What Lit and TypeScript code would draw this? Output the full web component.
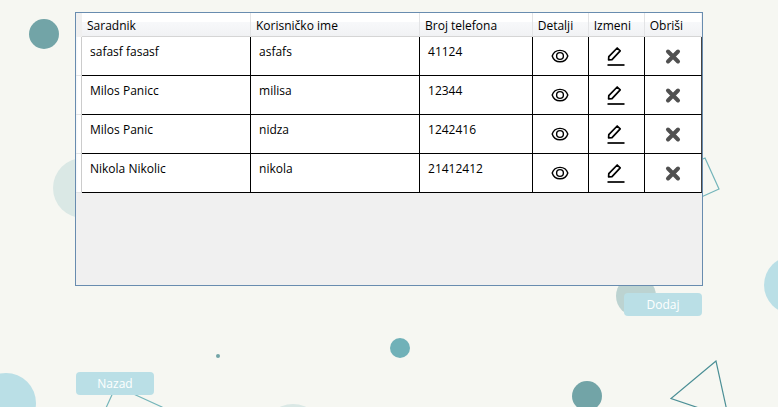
import { LitElement, html, css, svg } from "lit";
import { customElement, state } from "lit/decorators.js";

interface Associate {
  name: string;
  username: string;
  phone: string;
}

const eyeIcon = svg`<svg class="icon" viewBox="0 0 20 20" aria-hidden="true">
  <g fill="none" stroke="#000" stroke-width="1.4">
    <path d="M2.2 10C3.4 6.4 6.2 4.4 10 4.4S16.600 6.400 17.800 10C16.600 13.800 13.800 15.800 10 15.800S3.400 13.800 2.200 10Z"/>
    <circle cx="10" cy="10" r="3.400"/>
  </g>
</svg>`;

const pencilIcon = svg`<svg class="icon" viewBox="0 0 20 20" aria-hidden="true">
  <g fill="none" stroke="#000" stroke-width="1.7" stroke-linejoin="round">
    <path d="M2.600 14L2.800 10.600L11.200 2L14.200 4.900L6 13.600Z"/>
    <path d="M1.500 19H18.500"/>
  </g>
</svg>`;

const crossIcon = svg`<svg class="icon" viewBox="0 0 20 20" aria-hidden="true">
  <path d="M5 5.500L15 15.500M15 5.500L5 15.500" fill="none" stroke="#505050" stroke-width="4" stroke-linecap="round"/>
</svg>`;

@customElement("app-root")
export class AppRoot extends LitElement {
  static styles = css`
    :host {
      display: block;
      position: relative;
      overflow: hidden;
      background: #f6f7f2;
      color: #000;
      font: 12px/16px "Open Sans", "Noto Sans", sans-serif;
    }
    .backdrop {
      position: absolute;
      inset: 0;
      width: 100%;
      height: 100%;
    }
    .page {
      position: relative;
      box-sizing: border-box;
      min-height: 100vh;
      padding: 12px 75px;
      display: flex;
      flex-direction: column;
    }
    .grid {
      flex: 1;
      border: 1px solid #688caf;
      background: #f0f0f0;
    }
    table {
      width: 100%;
      table-layout: fixed;
      border-collapse: separate;
      border-spacing: 0;
    }
    .gutter { width: 6px; }
    .wide { width: 27%; }
    .medium { width: 18%; }
    .narrow { width: 56px; }
    th, td {
      box-sizing: border-box;
      padding: 0;
      text-align: left;
      font-weight: 400;
      white-space: nowrap;
    }
    th {
      height: 24px;
      padding: 5px 0 0 5px;
      vertical-align: top;
      border-bottom: 1px solid #d5d5d5;
      border-right: 1px solid #e3e4e6;
      background: linear-gradient(#fff 40%, #f7f8fa 41%, #f1f2f4);
    }
    th:last-child { border-right-color: #f1f2f4; }
    td {
      height: 39px;
      padding: 7px 0 0 8px;
      vertical-align: top;
      background: #fff;
      border-bottom: 1px solid #000;
      border-right: 1px solid #000;
    }
    td:last-child { border-right-color: #444; }
    .handle {
      padding: 0;
      border-right-color: #ccc;
      border-bottom-color: #e3e4e6;
      background: linear-gradient(90deg, #f4f5f7, #fff 40%);
    }
    .corner {
      height: 24px;
      padding: 0;
      border-color: #f0f0f0;
      background: #f0f0f0;
    }
    .action {
      padding: 0;
      vertical-align: middle;
      text-align: center;
    }
    .tool {
      display: inline-block;
      padding: 0;
      border: 0;
      background: none;
      vertical-align: middle;
      cursor: pointer;
    }
    .icon {
      display: block;
      width: 20px;
      height: 20px;
    }
    .push {
      width: 78px;
      height: 23px;
      padding: 0;
      border: 0;
      border-radius: 4px;
      background: #badfe6;
      color: #fff;
      font: inherit;
      cursor: pointer;
    }
    .add {
      align-self: flex-end;
      margin: 7px 1px 56px;
    }
    .back { margin-left: 1px; }
  `;

  @state() private associates: Associate[] = [
    { name: "safasf fasasf", username: "asfafs", phone: "41124" },
    { name: "Milos Panicc", username: "milisa", phone: "12344" },
    { name: "Milos Panic", username: "nidza", phone: "1242416" },
    { name: "Nikola Nikolic", username: "nikola", phone: "21412412" },
  ];

  private action(label: string, icon: unknown) {
    return html`<td class="action">
      <button class="tool" type="button" aria-label=${label}>${icon}</button>
    </td>`;
  }

  render() {
    return html`
      <svg class="backdrop" viewBox="0 0 778 407" preserveAspectRatio="xMidYMid slice" aria-hidden="true">
        <g fill="#72a4a7">
          <circle cx="44" cy="34" r="15"/>
          <circle cx="587" cy="396" r="15"/>
          <circle cx="218" cy="356" r="2"/>
        </g>
        <g fill="#dae8e5">
          <circle cx="83" cy="188" r="30"/>
          <circle cx="293" cy="434" r="30"/>
        </g>
        <g fill="#badfe6">
          <circle cx="6" cy="403" r="30"/>
          <circle cx="793" cy="285" r="29"/>
        </g>
        <circle cx="636" cy="296" r="20" fill="#bcd3d1"/>
        <circle cx="400" cy="348" r="10" fill="#70b1b8"/>
        <g fill="none" stroke="#74b5ba" stroke-width="1.2">
          <path d="M705 158L719 189L688 203L674 172Z"/>
          <path d="M116 386L162 407L141 453L95 432Z"/>
        </g>
        <path d="M716 361L671 398.500L728.500 418Z" fill="none" stroke="#4b8f96" stroke-width="1.2"/>
      </svg>
      <main class="page">
        <div class="grid">
          <table>
            <colgroup>
              <col class="gutter" /><col class="wide" /><col class="wide" /><col class="medium" />
              <col class="narrow" /><col class="narrow" /><col />
            </colgroup>
            <thead>
              <tr>
                <td class="handle corner"></td>
                <th scope="col">Saradnik</th>
                <th scope="col">Korisničko ime</th>
                <th scope="col">Broj telefona</th>
                <th scope="col">Detalji</th>
                <th scope="col">Izmeni</th>
                <th scope="col">Obriši</th>
              </tr>
            </thead>
            <tbody>
              ${this.associates.map(
                (a) => html`<tr>
                  <td class="handle"></td>
                  <td>${a.name}</td>
                  <td>${a.username}</td>
                  <td>${a.phone}</td>
                  ${this.action("Detalji", eyeIcon)}
                  ${this.action("Izmeni", pencilIcon)}
                  ${this.action("Obriši", crossIcon)}
                </tr>`
              )}
            </tbody>
          </table>
        </div>
        <button class="push add" type="button">Dodaj</button>
        <button class="push back" type="button">Nazad</button>
      </main>
    `;
  }
}
